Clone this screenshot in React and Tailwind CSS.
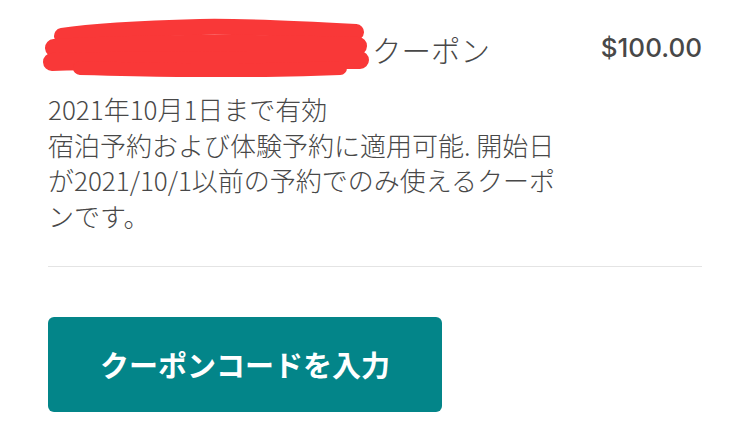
import React from "react";

const JP = { fontFamily: '"Noto Sans CJK JP", "Noto Sans", sans-serif' };

function Scribble() {
  return (
    <svg width="336" height="60" viewBox="0 0 336 60" className="block">
      <g stroke="#f93838" strokeLinecap="round" strokeLinejoin="round" fill="none">
        <path d="M22 19 C 60 13, 120 11, 160 10 S 260 12, 316 15" strokeWidth="16" />
        <path d="M14 31 C 80 27, 200 25, 318 29" strokeWidth="18" />
        <path d="M12 45 C 80 43, 200 43, 320 43" strokeWidth="18" />
        <path d="M40 51 C 120 53, 200 55, 300 51" strokeWidth="14" />
      </g>
    </svg>
  );
}

export default function App() {
  return (
    <div className="w-[750px] h-[437px] bg-white overflow-hidden text-[#484848]" style={JP}>
      <div className="px-[48px] pt-[17px]">
        <div className="flex items-start justify-between">
          <div className="flex items-center -ml-[8px]">
            <Scribble />
            <span className="text-[29.5px] font-light leading-none ml-[-4px] mt-[6px]">クーポン</span>
          </div>
          <span className="text-[26px] font-medium leading-none mt-[18px]" style={{ fontFamily: 'Inter, "Noto Sans", sans-serif' }}>
            $100.00
          </span>
        </div>
        <p className="whitespace-nowrap font-light text-[26px] leading-[35.5px] mt-[14px]">
          2021年10月1日まで有効
          <br />
          宿泊予約および体験予約に適用可能. 開始日
          <br />
          が2021/10/1以前の予約でのみ使えるクーポ
          <br />
          ンです。
        </p>
        <div className="h-[1px] bg-[#e4e4e4] mt-[33px]" />
        <button className="mt-[50px] w-[394px] h-[95px] rounded-[6px] bg-[#038589] text-white font-bold text-[29px] leading-none flex items-center justify-center">
          クーポンコードを入力
        </button>
      </div>
    </div>
  );
}
